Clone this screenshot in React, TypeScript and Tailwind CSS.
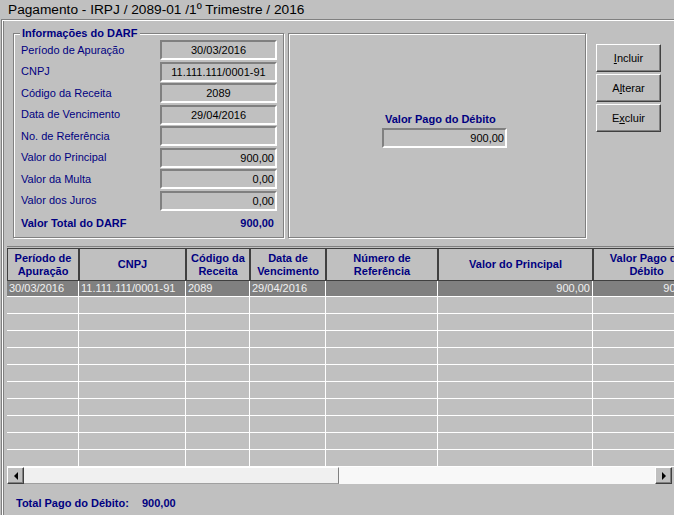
import React from 'react';

const fields: { label: string; value: string; align: 'center' | 'right' }[] = [
  { label: 'Período de Apuração', value: '30/03/2016', align: 'center' },
  { label: 'CNPJ', value: '11.111.111/0001-91', align: 'center' },
  { label: 'Código da Receita', value: '2089', align: 'center' },
  { label: 'Data de Vencimento', value: '29/04/2016', align: 'center' },
  { label: 'No. de Referência', value: '', align: 'center' },
  { label: 'Valor do Principal', value: '900,00', align: 'right' },
  { label: 'Valor da Multa', value: '0,00', align: 'right' },
  { label: 'Valor dos Juros', value: '0,00', align: 'right' },
];

const columns: { title: string[]; width: number; value: string; align: 'left' | 'right' }[] = [
  { title: ['Período de', 'Apuração'], width: 72, value: '30/03/2016', align: 'left' },
  { title: ['CNPJ'], width: 107, value: '11.111.111/0001-91', align: 'left' },
  { title: ['Código da', 'Receita'], width: 64, value: '2089', align: 'left' },
  { title: ['Data de', 'Vencimento'], width: 76, value: '29/04/2016', align: 'left' },
  { title: ['Número de', 'Referência'], width: 112, value: '', align: 'left' },
  { title: ['Valor do Principal'], width: 155, value: '900,00', align: 'right' },
  { title: ['Valor Pago do', 'Débito'], width: 107, value: '900,00', align: 'right' },
];

const emptyRows = Array.from({ length: 10 }, (_, i) => i);

function Field({ value, align, width }: { value: string; align: 'center' | 'right'; width: string }) {
  return (
    <div
      className={`${width} h-[20px] border-2 border-t-[#808080] border-l-[#808080] border-b-white border-r-white leading-[16px] ${
        align === 'right' ? 'text-right pr-[1px]' : 'text-center'
      }`}
    >
      {value}
    </div>
  );
}

function Button({ pre, key1, post }: { pre: string; key1: string; post: string }) {
  return (
    <div className="w-[65px] h-[28px] flex items-center justify-center border border-t-white border-l-white border-b-[#404040] border-r-[#404040] shadow-[inset_-1px_-1px_0_#808080]">
      {pre}
      <span className="underline">{key1}</span>
      {post}
    </div>
  );
}

function ScrollButton({ dir }: { dir: 'left' | 'right' }) {
  return (
    <div className="w-[17px] h-[17px] flex items-center justify-center bg-[#c0c0c0] border border-t-white border-l-white border-b-[#404040] border-r-[#404040] shadow-[inset_-1px_-1px_0_#808080]">
      {dir === 'left' ? (
        <div className="w-0 h-0 border-y-[4px] border-y-transparent border-r-[4px] border-r-black" />
      ) : (
        <div className="w-0 h-0 border-y-[4px] border-y-transparent border-l-[4px] border-l-black" />
      )}
    </div>
  );
}

export default function App() {
  return (
    <div className="w-[674px] h-[515px] overflow-hidden bg-[#c0c0c0] font-['Liberation_Sans',Arial,sans-serif] text-[11px] text-black">
      <div className="h-[19px] pl-[8px] text-[13.7px] leading-[19px] whitespace-nowrap">
        Pagamento - IRPJ / 2089-01 /1º Trimestre / 2016
      </div>

      <div className="ml-[1px] h-[496px] border-l border-t border-[#808080]">
        <div className="h-full border-l border-t border-white">
          <div className="h-full border-l border-[#808080]">
            {/* top section */}
            <div className="flex pt-[12px] pl-[9px]">
              <div className="relative w-[271px] h-[205px] border border-[#808080] shadow-[inset_1px_1px_0_#fff,1px_1px_0_#fff]">
                <div className="absolute -top-[7px] left-[6px] px-[2px] bg-[#c0c0c0] font-bold text-[#000080] leading-[13px]">
                  Informações do DARF
                </div>
                <div className="flex flex-col gap-[1.5px] pt-[6px]">
                  {fields.map((f) => (
                    <div key={f.label} className="flex items-center h-[20px]">
                      <div className="w-[146px] pl-[7px] text-[#000080] whitespace-nowrap">{f.label}</div>
                      <Field value={f.value} align={f.align} width="w-[117px]" />
                    </div>
                  ))}
                  <div className="flex items-center h-[22px] font-bold text-[#000080]">
                    <div className="w-[146px] pl-[7px] whitespace-nowrap">Valor Total do DARF</div>
                    <div className="w-[117px] text-right pr-[3px]">900,00</div>
                  </div>
                </div>
              </div>

              <div className="ml-[4px] w-[298px] h-[205px] border border-[#808080] shadow-[inset_1px_1px_0_#fff,1px_1px_0_#fff] pt-[78px] pl-[93px]">
                <div className="pl-[3px] font-bold text-[#000080] leading-[14px] whitespace-nowrap">Valor Pago do Débito</div>
                <div className="mt-[2px]">
                  <Field value="900,00" align="right" width="w-[125px]" />
                </div>
              </div>

              <div className="ml-[10px] pt-[11px] flex flex-col gap-[2px]">
                <Button pre="" key1="I" post="ncluir" />
                <Button pre="A" key1="l" post="terar" />
                <Button pre="E" key1="x" post="cluir" />
              </div>
            </div>

            {/* grid */}
            <div className="mt-[8px] ml-[3px] w-[667px] overflow-hidden border-t border-[#808080]">
              <div className="w-[700px] pt-[1px]">
                <div className="flex">
                  {columns.map((c) => (
                    <div
                      key={c.title.join(' ')}
                      style={{ width: c.width }}
                      className="shrink-0 h-[33px] flex flex-col items-center justify-center border border-[#404040] font-bold text-[#000080] leading-[13px] whitespace-nowrap"
                    >
                      {c.title.map((t) => (
                        <span key={t}>{t}</span>
                      ))}
                    </div>
                  ))}
                </div>
                <div className="flex bg-[#808080] text-[#f0f0f0]">
                  {columns.map((c) => (
                    <div
                      key={c.title.join(' ')}
                      style={{ width: c.width }}
                      className={`shrink-0 h-[16px] border-r border-b border-white px-[2px] leading-[15px] whitespace-nowrap ${
                        c.align === 'right' ? 'text-right' : 'text-left'
                      }`}
                    >
                      {c.value}
                    </div>
                  ))}
                </div>
                {emptyRows.map((r) => (
                  <div key={r} className="flex">
                    {columns.map((c) => (
                      <div
                        key={c.title.join(' ')}
                        style={{ width: c.width }}
                        className="shrink-0 h-[17px] border-r border-b border-white"
                      />
                    ))}
                  </div>
                ))}
              </div>
              <div className="flex w-[665px] h-[17px]">
                <ScrollButton dir="left" />
                <div className="w-[315px] h-[17px] bg-[#f0f0f0] border-t border-white border-b border-b-[#a0a0a0] border-r border-r-[#808080]" />
                <div className="flex-1 h-[17px] bg-[#f8f8f8]" />
                <ScrollButton dir="right" />
              </div>
            </div>

            {/* footer */}
            <div className="pl-[12px] pt-[13px] font-bold text-[#000080] leading-[13px] whitespace-nowrap">
              <span className="inline-block w-[126px]">Total Pago do Débito:</span>
              <span>900,00</span>
            </div>
          </div>
        </div>
      </div>
    </div>
  );
}
